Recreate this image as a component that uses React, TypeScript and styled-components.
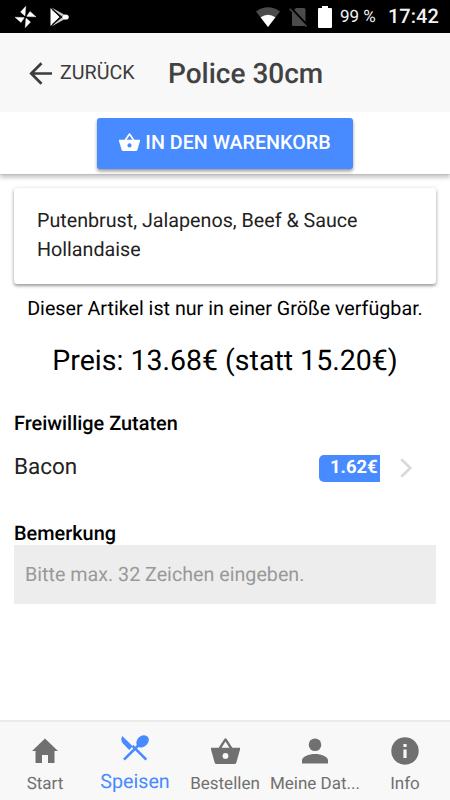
import React from "react";
import styled, { createGlobalStyle } from "styled-components";

const GlobalStyle = createGlobalStyle`
  * { box-sizing: border-box; }
  html, body { margin: 0; background: #fff; }
  body {
    font-family: Roboto, "Liberation Sans", sans-serif;
    color: #000;
    overflow: hidden;
    text-rendering: geometricPrecision;
  }
  h1, h2, h3, p { margin: 0; font-weight: 400; }
  button, input { font-family: inherit; border: 0; outline: 0; text-rendering: inherit; }
`;

const Screen = styled.div`
  width: 450px;
  height: 800px;
  display: flex;
  flex-direction: column;
  background: #fff;
  overflow: hidden;
  white-space: nowrap;
`;

const StatusBar = styled.header`
  height: 33px;
  flex: none;
  display: flex;
  align-items: center;
  padding: 0 12px 0 15px;
  background: #000;
  color: #f2f2f2;
  svg { display: block; flex: none; }
`;

const StatusIcons = styled.div`
  display: flex;
  align-items: center;
  gap: 14px;
  margin-right: auto;
`;

const SignalIcons = styled.div`
  display: flex;
  align-items: center;
  gap: 9px;
  margin-right: 8px;
`;

const BatteryLevel = styled.span`
  width: 36px;
  font-size: 17px;
  line-height: 32px;
`;

const Clock = styled.span`
  margin-left: 12px;
  width: 50px;
  font-size: 20px;
  font-weight: 500;
  line-height: 31px;
  padding-bottom: 1px;
`;

const NavBar = styled.nav`
  height: 79px;
  flex: none;
  display: flex;
  align-items: center;
  background: #f8f8f8;
  color: #424242;
  padding-left: 29px;
`;

const BackButton = styled.button`
  display: flex;
  align-items: center;
  gap: 7px;
  width: 107px;
  padding: 0;
  background: none;
  color: #3c3c3c;
  font-size: 19.7px;
  line-height: 24px;
  svg { flex: none; margin-top: 2px; }
`;

const Title = styled.h1`
  margin-left: 32px;
  padding-top: 3px;
  font-size: 28px;
  font-weight: 500;
  line-height: 32px;
`;

const ActionBar = styled.div`
  height: 62px;
  flex: none;
  display: flex;
  justify-content: center;
  align-items: flex-start;
  padding-top: 6px;
  background: #fff;
  box-shadow: 0 4px 4px rgba(0, 0, 0, 0.2), 0 1px 1px rgba(0, 0, 0, 0.08);
`;

const CartButton = styled.button`
  width: 256px;
  height: 51px;
  display: flex;
  align-items: center;
  justify-content: center;
  gap: 5px;
  padding: 0 0 2px;
  border-radius: 3px;
  background: #488aff;
  color: #fff;
  font-size: 19.7px;
  font-weight: 500;
  box-shadow: 0 2px 3px rgba(0, 0, 0, 0.28), 0 3px 4px rgba(0, 0, 0, 0.14);
  svg { margin-bottom: 2px; }
`;

const Content = styled.main`
  flex: 1;
  display: flex;
  flex-direction: column;
  padding: 14px 14px 0;
`;

const Card = styled.section`
  height: 96px;
  padding: 18px 23px;
  border-radius: 3px;
  font-size: 19.7px;
  line-height: 29px;
  color: #222;
  box-shadow: 0 2px 3px rgba(0, 0, 0, 0.3), 0 1px 5px rgba(0, 0, 0, 0.16);
`;

const Availability = styled.p`
  padding-top: 13px;
  text-align: center;
  font-size: 19.7px;
  line-height: 24px;
`;

const Price = styled.h2`
  margin-top: 24px;
  text-align: center;
  font-size: 28.5px;
  line-height: 32px;
`;

const SectionTitle = styled.h3<{ $gap: number }>`
  margin-top: ${(p) => p.$gap}px;
  font-size: 19.9px;
  font-weight: 500;
  line-height: 24px;
`;

const ExtraRow = styled.div`
  height: 60px;
  display: flex;
  align-items: center;
  padding: 4px 23px 0 0;
`;

const ExtraName = styled.span`
  flex: 1;
  font-size: 22.5px;
  line-height: 28px;
  color: #222;
  padding-bottom: 3px;
`;

const PriceBadge = styled.span`
  width: 61px;
  height: 27px;
  margin-right: 20px;
  padding-left: 11px;
  border-radius: 5px 0 0 5px;
  background: #488aff;
  color: #fff;
  font-size: 18.4px;
  font-weight: 700;
  line-height: 25px;
  overflow: hidden;
`;

const NoteInput = styled.input`
  width: 422px;
  height: 59px;
  margin-top: -1px;
  padding: 0 11px 1px;
  border-radius: 0;
  background: #ededed;
  font-size: 19.7px;
  &::placeholder { color: #999; opacity: 1; }
`;

const TabBar = styled.nav`
  height: 80px;
  flex: none;
  display: grid;
  grid-template-columns: repeat(5, 90px);
  background: #f8f8f8;
  border-top: 2px solid #ebebeb;
`;

const Tab = styled.button<{ $active?: boolean }>`
  display: flex;
  flex-direction: column;
  align-items: center;
  padding: ${(p) => (p.$active ? 13 : 16)}px 0 0;
  background: none;
  color: ${(p) => (p.$active ? "#488aff" : "#707070")};
  svg { display: block; flex: none; }
`;

const TabLabel = styled.span<{ $active?: boolean }>`
  margin-top: ${(p) => (p.$active ? 9 : 8)}px;
  font-size: ${(p) => (p.$active ? 19.7 : 17)}px;
  line-height: 24px;
`;

const InfoTab = styled(Tab)`
  padding-top: 15px;
  ${TabLabel} { margin-top: 7px; }
`;

const BASKET =
  "M17.2 9 12.9 2.5Q12 1.5 11.1 2.5L6.8 9H1Q.8 9 1 10.2L3.8 20Q4.2 21 5.2 21H18.8Q19.8 21 20.2 20L23 10.2Q23.2 9 23 9ZM9 9l3-4.6L15 9ZM12 17.2a2.2 2.2 0 1 1 0-4.4 2.2 2.2 0 0 1 0 4.4Z";

const Basket = ({ width, height }: { width: number; height: number }) => (
  <svg width={width} height={height} viewBox="1 1.8 22 19.2" preserveAspectRatio="none" fill="currentColor" fillRule="evenodd">
    <path d={BASKET} />
  </svg>
);

const Pinwheel = () => (
  <svg width="21" height="22" viewBox="0 0 21 22" fill="#fff">
    <path d="M10 10 5.5 6 10.8.3ZM11.5 10.5 15 5.5 21 10.8ZM11 12 15.5 16 10.2 21.7ZM9.5 11.5 6 16.5 0 11.2Z" stroke="#fff" strokeWidth=".4" />
    <circle cx="10.5" cy="11" r="1.2" fill="#000" />
  </svg>
);

const PlayGames = () => (
  <svg width="19" height="20" viewBox="0 0 19 20">
    <path d="M.5 1V19L9.5 10Z" fill="#fff" />
    <path d="M1.5.6 14.5 7.8l-3 2.2ZM1.5 19.4l13-7.2-3-2.2Z" fill="#ccc" />
    <path d="m2.5 2.6 12 9.7M2.5 17.4l12-9.7" stroke="#111" strokeWidth="1.1" />
    <ellipse cx="15.5" cy="10" rx="3.3" ry="2.6" fill="#fff" />
  </svg>
);

const Wifi = () => (
  <svg width="24" height="20" viewBox="0 0 24 20">
    <path d="M0 4.5Q12-3.8 24 4.5L12 20Z" fill="#4b4b4b" />
    <path d="M4.6 10.3Q12 5.2 19.4 10.3L12 20Z" fill="#fff" />
  </svg>
);

const NoSim = () => (
  <svg width="20" height="20" viewBox="0 0 20 20">
    <path d="M7 1h8q1.5 0 1.5 1.5V17.5q0 1.5-1.5 1.5H4.5Q3 19 3 17.5V5Z" fill="#4b4b4b" />
    <path d="m1.2.3 17.5 18.5" stroke="#000" strokeWidth="2.5" />
    <path d="m.6 1.8 16.9 17.7" stroke="#4b4b4b" strokeWidth="1.5" />
  </svg>
);

const Battery = () => (
  <svg width="14" height="22" viewBox="0 0 14 22" fill="#fff">
    <path d="M4 0h6v2h3q1 0 1 1v18q0 1-1 1H1q-1 0-1-1V3q0-1 1-1h3Z" />
  </svg>
);

const Arrow = () => (
  <svg width="24" height="23" viewBox="0 0 24 23" fill="none" stroke="currentColor" strokeWidth="2.7">
    <path d="M23 11.5H2.5M12.5 1.2 2.2 11.5l10.3 10.3" />
  </svg>
);

const Chevron = () => (
  <svg width="13" height="20" viewBox="0 0 13 20" fill="none" stroke="#d8d8d8" strokeWidth="2.6">
    <path d="m1.3 1.3 9 8.7-9 8.7" />
  </svg>
);

const Home = () => (
  <svg width="28" height="26" viewBox="0 0 28 26" fill="currentColor">
    <path d="M14 .5 27 13h-3.5v12H17v-8h-6v8H4.5V13H1Z" />
  </svg>
);

const Cutlery = () => (
  <svg width="28" height="26" viewBox="0 0 28 26">
    <path d="M1.3 1 11.7 11.3 8.2 15 1.7 8.3Q-.9 4.9 1.3 1Z" fill="currentColor" />
    <path d="M3 24.7 18.7 9M11.5 10.8 25.3 24.7" stroke="currentColor" strokeWidth="2.6" fill="none" />
    <ellipse cx="21.6" cy="6.3" rx="6.9" ry="5.4" transform="rotate(-42 21.6 6.3)" fill="currentColor" />
  </svg>
);

const Person = () => (
  <svg width="26" height="26" viewBox="0 0 26 26" fill="currentColor">
    <circle cx="13" cy="6.8" r="6.3" />
    <path d="M0 25.5v-3.2C0 18.5 7 16 13 16s13 2.5 13 6.3v3.2Z" />
  </svg>
);

const Info = () => (
  <svg width="28" height="28" viewBox="0 0 28 28">
    <circle cx="14" cy="14" r="13.7" fill="currentColor" />
    <path d="M12.4 7h3.2v3h-3.2ZM12.4 12.4h3.2V21h-3.2Z" fill="#f8f8f8" />
  </svg>
);

const tabs = [
  { label: "Start", icon: <Home /> },
  { label: "Speisen", icon: <Cutlery />, active: true },
  { label: "Bestellen", icon: <Basket width={29} height={26} /> },
  { label: "Meine Dat...", icon: <Person /> },
  { label: "Info", icon: <Info /> },
];

export default function App() {
  return (
    <Screen>
      <GlobalStyle />
      <StatusBar>
        <StatusIcons>
          <Pinwheel />
          <PlayGames />
        </StatusIcons>
        <SignalIcons>
          <Wifi />
          <NoSim />
          <Battery />
        </SignalIcons>
        <BatteryLevel>99 %</BatteryLevel>
        <Clock>17:42</Clock>
      </StatusBar>
      <NavBar>
        <BackButton>
          <Arrow />
          ZURÜCK
        </BackButton>
        <Title>Police 30cm</Title>
      </NavBar>
      <ActionBar>
        <CartButton>
          <Basket width={21} height={18} />
          IN DEN WARENKORB
        </CartButton>
      </ActionBar>
      <Content>
        <Card>
          Putenbrust, Jalapenos, Beef &amp; Sauce
          <br />
          Hollandaise
        </Card>
        <Availability>Dieser Artikel ist nur in einer Größe verfügbar.</Availability>
        <Price>Preis: 13.68€ (statt 15.20€)</Price>
        <SectionTitle $gap={35}>Freiwillige Zutaten</SectionTitle>
        <ExtraRow>
          <ExtraName>Bacon</ExtraName>
          <PriceBadge>1.62€</PriceBadge>
          <Chevron />
        </ExtraRow>
        <SectionTitle $gap={26}>Bemerkung</SectionTitle>
        <NoteInput placeholder="Bitte max. 32 Zeichen eingeben." maxLength={32} />
      </Content>
      <TabBar>
        {tabs.map(({ label, icon, active }) => {
          const Item = label === "Info" ? InfoTab : Tab;
          return (
            <Item key={label} $active={active}>
              {icon}
              <TabLabel $active={active}>{label}</TabLabel>
            </Item>
          );
        })}
      </TabBar>
    </Screen>
  );
}
